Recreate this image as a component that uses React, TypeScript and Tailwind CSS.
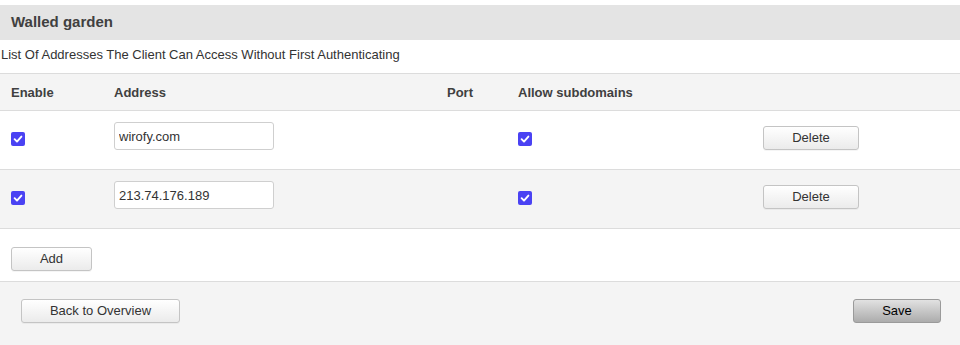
import React, { useState } from 'react';

interface GardenRow {
    id: number;
    enabled: boolean;
    address: string;
    port: string;
    subdomains: boolean;
}

const initialRows: GardenRow[] = [
    { id: 1, enabled: true, address: 'wirofy.com', port: '', subdomains: true },
    { id: 2, enabled: true, address: '213.74.176.189', port: '', subdomains: true },
];

const cols = 'grid grid-cols-[103px_333px_71px_245px_1fr]';

const Check: React.FC<{ checked: boolean; onChange: () => void }> = ({ checked, onChange }) => (
    <button
        onClick={onChange}
        className={`w-[14px] h-[14px] rounded-[2px] flex items-center justify-center ${checked ? 'bg-[#4a42f3]' : 'bg-white border border-[#767676]'}`}
    >
        {checked && (
            <svg width="10" height="10" viewBox="0 0 10 10">
                <path d="M1.6 5.2 L4 7.6 L8.4 2.6" fill="none" stroke="white" strokeWidth="1.9" strokeLinecap="round" strokeLinejoin="round" />
            </svg>
        )}
    </button>
);

const btn =
    'h-[24px] rounded-[3px] border border-[#c4c4c4] bg-gradient-to-b from-white to-[#ebebeb] text-[13px] text-[#333] shadow-[0_1px_0_rgba(0,0,0,0.04)]';

export default function App() {
    const [rows, setRows] = useState<GardenRow[]>(initialRows);

    const toggle = (id: number, key: 'enabled' | 'subdomains') =>
        setRows(rows.map(r => (r.id === id ? { ...r, [key]: !r[key] } : r)));

    const setAddress = (id: number, value: string) =>
        setRows(rows.map(r => (r.id === id ? { ...r, address: value } : r)));

    return (
        <div className="w-[960px] h-[345px] bg-white pt-[5px] text-[#333] font-['Liberation_Sans',Arial,sans-serif]">
            <div className="h-[35px] bg-[#e4e4e4] flex items-center pl-[11px]">
                <h2 className="text-[15px] font-bold text-[#404040]">Walled garden</h2>
            </div>
            <div className="h-[33px] pl-[1px] pt-[5px] text-[13px] text-[#333]">
                List Of Addresses The Client Can Access Without First Authenticating
            </div>

            {/* table */}
            <div className={`${cols} items-center h-[38px] bg-[#f4f4f4] border-t border-b border-[#dcdcdc] text-[13px] font-bold text-[#404040] pt-[1px]`}>
                <div className="pl-[11px]">Enable</div>
                <div className="pl-[11px]">Address</div>
                <div className="pl-[11px]">Port</div>
                <div className="pl-[11px]">Allow subdomains</div>
                <div></div>
            </div>
            {rows.map((row, i) => (
                <div key={row.id} className={`${cols} items-start h-[59px] border-b border-[#dcdcdc] ${i % 2 ? 'bg-[#f4f4f4]' : 'bg-white'}`}>
                    <div className="pl-[11px] pt-[21px]">
                        <Check checked={row.enabled} onChange={() => toggle(row.id, 'enabled')} />
                    </div>
                    <div className="pl-[11px] pt-[11px]">
                        <input
                            value={row.address}
                            onChange={e => setAddress(row.id, e.target.value)}
                            className="w-[160px] h-[28px] border border-[#cfcfcf] rounded-[3px] bg-white px-[4px] text-[13px] text-[#333] outline-none"
                        />
                    </div>
                    <div></div>
                    <div className="pl-[11px] pt-[21px]">
                        <Check checked={row.subdomains} onChange={() => toggle(row.id, 'subdomains')} />
                    </div>
                    <div className="pl-[11px] pt-[14px]">
                        <button
                            onClick={() => setRows(rows.filter(r => r.id !== row.id))}
                            className={`${btn} w-[96px]`}
                        >
                            Delete
                        </button>
                    </div>
                </div>
            ))}

            <div className="h-[53px] border-b border-[#dcdcdc] pl-[11px] pt-[17px]">
                <button
                    onClick={() => setRows([...rows, { id: Date.now(), enabled: true, address: '', port: '', subdomains: false }])}
                    className={`${btn} w-[81px]`}
                >
                    Add
                </button>
            </div>

            {/* footer */}
            <div className="h-[63px] bg-[#f4f4f4] flex items-start justify-between pl-[21px] pr-[19px] pt-[17px]">
                <button className={`${btn} w-[159px]`}>Back to Overview</button>
                <button className="h-[24px] w-[88px] rounded-[3px] border border-[#9a9a9a] bg-gradient-to-b from-[#e2e2e2] to-[#acacac] text-[13px] text-black">
                    Save
                </button>
            </div>
        </div>
    );
}
